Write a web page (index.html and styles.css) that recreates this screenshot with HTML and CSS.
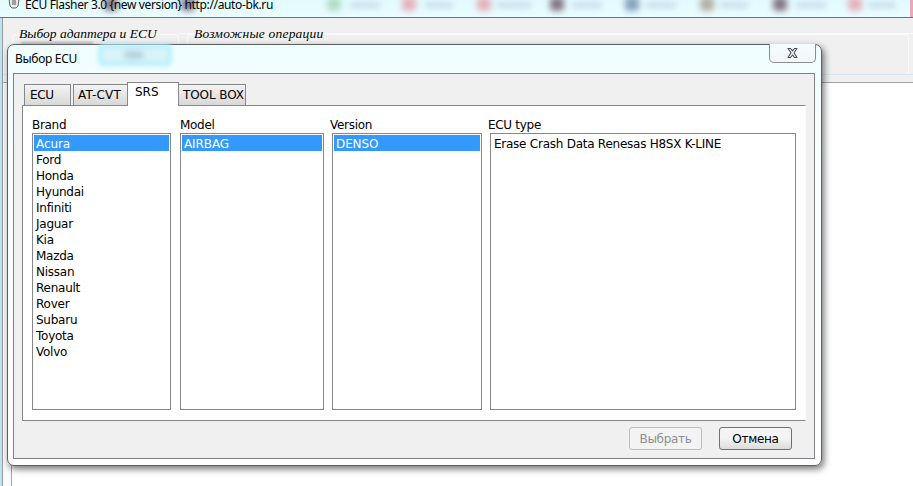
FILE: index.html
```html
<!DOCTYPE html>
<html lang="ru">
<head>
<meta charset="utf-8">
<title>ECU Flasher 3.0</title>
<link rel="stylesheet" href="styles.css">
</head>
<body>
<div class="app">
  <header class="titlebar">
    <svg class="app-icon" width="12" height="10" viewBox="0 0 12 10"><path d="M1 0 L2 7 L4 9 H8 L10 7 L11 0" fill="#e8e8e8" stroke="#666" stroke-width="1"/><path d="M5 0 V6 M7 0 V6" stroke="#555" stroke-width="1"/></svg>
    <span class="app-title">ECU Flasher 3.0 {new version} http://auto-bk.ru</span>
    <div class="glass-items">
      <i class="blob dark b1"></i><i class="blob dark b2"></i>
      <i class="blob green b3"></i><i class="bar b3t"></i>
      <i class="blob red b4"></i><i class="bar b4t"></i>
      <i class="blob red b5"></i><i class="bar b5t"></i>
      <i class="blob dark b6"></i><i class="bar b6t"></i>
      <i class="blob blue b7"></i><i class="bar b7t"></i>
      <i class="blob brown b8"></i><i class="bar b8t"></i>
      <i class="blob dark b9"></i><i class="bar b9t"></i>
      <i class="blob red b10"></i><i class="bar b10t"></i>
      <i class="edge"></i>
    </div>
  </header>
  <section class="toolbar">
    <div class="group group-a"><span class="group-title">Выбор адаптера и ECU</span></div>
    <div class="group group-b"><span class="group-title group-title-wide">Возможные операции</span></div>
  </section>
  <main class="workspace"><div class="workspace-inner"></div></main>
</div>

<div class="glow"><i class="glow-text"></i></div>
<div class="ghost-line"></div>

<div class="dialog">
  <div class="dialog-head">
    <span class="dialog-title">Выбор ECU</span>
    <button class="close" aria-label="Закрыть">
      <svg width="13" height="12" viewBox="0 0 13 12"><path d="M2 1.5 H4.5 L6.5 3.8 L8.5 1.5 H11 L8 5.8 L11 10.5 H8.5 L6.5 8 L4.5 10.5 H2 L5 5.8 Z" fill="#f4f4f4" stroke="#4a4f57" stroke-width="1.1" stroke-linejoin="round"/></svg>
    </button>
  </div>
  <div class="dialog-body">
    <nav class="tabs">
      <span class="tab tab-ecu">ECU</span>
      <span class="tab tab-cvt">AT-CVT</span>
      <span class="tab tab-active">SRS</span>
      <span class="tab tab-box">TOOL BOX</span>
    </nav>
    <div class="panel">
      <div class="col col-brand">
        <label class="col-label">Brand</label>
        <ul class="list">
          <li class="sel">Acura</li><li>Ford</li><li>Honda</li><li>Hyundai</li><li>Infiniti</li><li>Jaguar</li><li>Kia</li><li>Mazda</li><li>Nissan</li><li>Renault</li><li>Rover</li><li>Subaru</li><li>Toyota</li><li>Volvo</li>
        </ul>
      </div>
      <div class="col col-model">
        <label class="col-label">Model</label>
        <ul class="list"><li class="sel">AIRBAG</li></ul>
      </div>
      <div class="col col-version">
        <label class="col-label shifted">Version</label>
        <ul class="list"><li class="sel">DENSO</li></ul>
      </div>
      <div class="col col-type">
        <label class="col-label shifted">ECU type</label>
        <ul class="list"><li>Erase Crash Data Renesas H8SX K-LINE</li></ul>
      </div>
    </div>
    <div class="actions">
      <button class="btn" disabled>Выбрать</button>
      <button class="btn primary">Отмена</button>
    </div>
  </div>
</div>
</body>
</html>
```

FILE: styles.css
```css
* { box-sizing: border-box; }
html, body { margin: 0; height: 100%; }
body {
  width: 913px;
  height: 486px;
  overflow: hidden;
  position: relative;
  background: #fff;
  font-family: "DejaVu Sans", sans-serif;
  font-size: 12px;
  color: #000;
}
.app { height: 486px; display: flex; flex-direction: column; background: #b9e4f5; }

.titlebar {
  height: 18px;
  flex: none;
  background: linear-gradient(#e2fbff, #eafcff);
  border-bottom: 1px solid #6f7274;
  display: flex;
  align-items: flex-start;
  position: relative;
  overflow: hidden;
}
.app-icon { margin: -1px 0 0 8px; flex: none; }
.app-title {
  margin: -3px 0 0 5px;
  font-family: "Noto Sans", sans-serif;
  font-size: 12px;
  line-height: 16px;
  letter-spacing: -0.36px;
  white-space: nowrap;
  position: relative;
  z-index: 1;
}
.glass-items { position: absolute; inset: 0; }
.blob { position: absolute; top: -3px; width: 14px; height: 14px; border-radius: 4px; filter: blur(3px); opacity: .7; }
.bar { position: absolute; top: 2px; height: 6px; background: #b4c8da; filter: blur(3px); opacity: .6; }
.dark { background: #5e3f52; }
.green { background: #9fd0a8; }
.red { background: #e8909f; }
.blue { background: #5f7ca0; }
.brown { background: #a08f7c; }
.b1 { left: 104px; } .b2 { left: 181px; }
.b3 { left: 327px; } .b3t { left: 350px; width: 30px; }
.b4 { left: 402px; } .b4t { left: 425px; width: 28px; }
.b5 { left: 477px; } .b5t { left: 497px; width: 34px; }
.b6 { left: 550px; } .b6t { left: 572px; width: 30px; }
.b7 { left: 625px; } .b7t { left: 646px; width: 30px; }
.b8 { left: 700px; } .b8t { left: 720px; width: 28px; }
.b9 { left: 773px; } .b9t { left: 796px; width: 30px; }
.b10 { left: 848px; } .b10t { left: 868px; width: 28px; }
.edge { position: absolute; right: 0; top: 0; width: 3px; height: 17px; background: #e9a9b8; }

.toolbar {
  height: 65px;
  flex: none;
  margin-left: 2px;
  padding: 16px 0 0 9px;
  background: #f0f0f0;
  border-left: 1px solid #9a9a9a;
  border-bottom: 1px solid #a5a5a5;
  display: flex;
  gap: 8px;
  position: relative;
}
.toolbar::after {
  content: "";
  position: absolute;
  left: 0; right: 0; bottom: 7px;
  height: 1px;
  background: #d9e6f0;
}
.toolbar::before {
  content: "";
  position: absolute;
  left: 176px; right: 0; top: 15px;
  height: 1px;
  background: #fafafa;
}
.group {
  height: 40px;
  border: 1px solid #fafafa;
  border-bottom: 0;
  border-radius: 4px 4px 0 0;
  position: relative;
  flex: none;
}
.group-a { width: 167px; }
.group-b { width: 722px; }
.group-title {
  position: absolute;
  top: -9px;
  left: 6px;
  font-family: "Liberation Serif", serif;
  font-style: italic;
  font-size: 13.5px;
  line-height: 16px;
  white-space: nowrap;
  z-index: 1;
}
.group-title-wide { letter-spacing: 0.2px; }
.workspace {
  flex: 1;
  margin-left: 2px;
  border-left: 1px solid #9a9a9a;
  background: #fafafa;
  padding-left: 8px;
  display: flex;
}
.workspace-inner { flex: 1; background: #fff; border-left: 1px solid #a5a5a5; }

.glow {
  position: absolute;
  left: 98px; top: 44px;
  width: 74px; height: 22px;
  z-index: 2;
  background: #d8f3fa;
  border: 4px solid #b4efff;
  border-radius: 5px;
  filter: blur(2px);
}
.glow-text {
  position: absolute;
  left: 23px; top: 4px;
  width: 18px; height: 6px;
  background: #a9c6d6;
  filter: blur(2px);
}
.ghost-line {
  position: absolute;
  left: 21px; top: 42px;
  width: 72px; height: 2px;
  background: #777;
  filter: blur(1px);
  opacity: .5;
}

.dialog {
  position: absolute;
  left: 7px; top: 44px;
  width: 815px; height: 422px;
  border: 1px solid #5d5f60;
  border-radius: 7px;
  background: linear-gradient(#effdff, #fbffff 30%, #fff);
  box-shadow: 2px 3px 7px rgba(0,0,0,.55);
  padding: 0 6px 6px 5px;
  display: flex;
  flex-direction: column;
  z-index: 1;
}
.dialog-head {
  height: 28px;
  flex: none;
  display: flex;
  justify-content: space-between;
  align-items: flex-start;
  position: relative;
}
.dialog-title { margin: 6px 0 0 2px; font-family: "Noto Sans", sans-serif; line-height: 16px; letter-spacing: -0.3px; position: relative; z-index: 3; }
.close {
  margin: -1px -1px 0 0;
  width: 47px; height: 19px;
  padding: 0;
  background: linear-gradient(#f2fdff, #f6f6f6);
  border: 1px solid #8a8d90;
  border-top: 0;
  border-radius: 0 0 5px 5px;
  display: flex;
  align-items: center;
  justify-content: center;
}
.dialog-body {
  flex: 1;
  background: #f0f0f0;
  border: 1px solid #7f8083;
  padding: 8px 9px 0 8px;
  display: flex;
  flex-direction: column;
  min-height: 0;
}
.tabs { height: 23px; flex: none; display: flex; align-items: flex-end; padding-left: 2px; position: relative; z-index: 1; }
.tab {
  height: 21px;
  border: 1px solid #85878b;
  border-bottom: 0;
  background: linear-gradient(#f3f3f3, #d8d8d8);
  line-height: 21px;
  padding-left: 5px;
  white-space: nowrap;
}
.tab-ecu { width: 47px; margin-right: 2px; letter-spacing: -0.4px; }
.tab-cvt { width: 55px; padding-left: 4px; letter-spacing: 0.2px; }
.tab-active {
  width: 52px; height: 24px;
  background: #fff;
  margin-bottom: -1px;
  padding-left: 7px;
  line-height: 19px;
  margin-left: -1px;
}
.tab-box { width: 68px; margin-left: -1px; padding-left: 4px; letter-spacing: -0.1px; }

.panel {
  width: 784px;
  height: 316px;
  flex: none;
  background: #fff;
  border: 1px solid #85878b;
  border-right-color: #fbfbfb;
  padding: 11px 0 0 9px;
  display: flex;
}
.col { display: flex; flex-direction: column; flex: none; }
.col-brand { width: 139px; margin-right: 9px; }
.col-model { width: 144px; margin-right: 8px; }
.col-version { width: 150px; margin-right: 8px; }
.col-type { width: 306px; }
.col-label { height: 16px; line-height: 16px; letter-spacing: -0.3px; }
.shifted { margin-left: -2px; }
.list {
  list-style: none;
  margin: 0;
  padding: 1px;
  height: 277px;
  border: 1px solid #85878b;
  background: #fff;
}
.list li { height: 16px; line-height: 18px; padding-left: 2px; white-space: nowrap; letter-spacing: -0.25px; }
.list .sel { background: #3399ff; color: #fff; letter-spacing: -0.1px; }

.actions {
  display: flex;
  justify-content: flex-end;
  gap: 17px;
  padding: 6px 13px 0 0;
}
.btn {
  width: 73px; height: 23px;
  padding: 0;
  font: inherit;
  letter-spacing: -0.3px;
  color: #000;
  background: linear-gradient(#f4f4f4 50%, #dcdcdc);
  border: 1px solid #707070;
  border-radius: 3px;
}
.btn:disabled {
  color: #8a8f94;
  background: #f3f3f3;
  border-color: #bdbdbd;
}
```
